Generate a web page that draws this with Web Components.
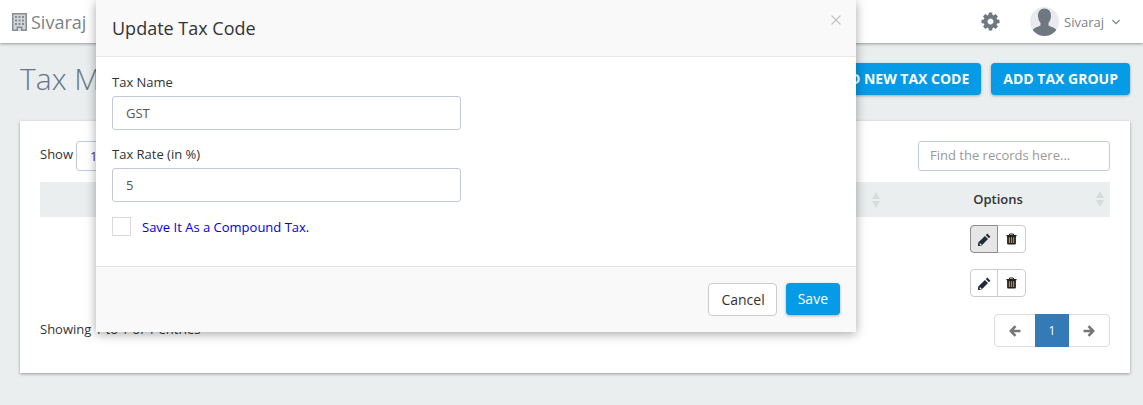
<!DOCTYPE html>
<html lang="en">
  <head>
    <meta charset="UTF-8" />
    <title>Tax Management</title>
    <style>
      html,
      body {
        margin: 0;
        height: 100%;
        overflow: hidden;
      }
      body {
        background: #eaeeef;
        font: 13px/18px "Open Sans", "Liberation Sans", sans-serif;
        color: #333;
      }
    </style>
  </head>
  <body>
    <template id="app-navbar">
      <style>
        :host {
          display: flex;
          align-items: center;
          height: 43px;
          padding: 0 23px 0 12px;
          background: #fff;
          box-shadow: 0 1px 3px rgba(0, 0, 0, 0.35);
        }
        .brand {
          display: flex;
          align-items: center;
          gap: 4px;
          font-size: 18px;
          color: #7b8389;
        }
        .spacer {
          flex: 1;
        }
        .gear {
          width: 21px;
          height: 21px;
          margin-right: 29px;
          fill: #6f7780;
        }
        .user {
          display: flex;
          align-items: center;
          font-size: 13px;
          color: #7b8389;
        }
        .avatar {
          width: 29px;
          height: 29px;
          margin-right: 5px;
        }
        .chev {
          width: 8px;
          height: 6px;
          margin-left: 8px;
        }
      </style>
      <div class="brand">
        <svg width="15" height="18" viewBox="0 0 15 18">
          <path fill="#d3d6d8" d="M0 0h15v18H0z" />
          <path fill="#868d92" fill-rule="evenodd" d="M0 0h15v18H9v-3H6v3H0zM1.500 1.500v15H4.500v-3h6v3h3v-15z" />
          <path fill="#868d92" d="M3 3h2v2H3zM6.500 3h2v2h-2zM10 3h2v2h-2zM3 6.500h2v2H3zM6.500 6.500h2v2h-2zM10 6.500h2v2h-2zM3 10h2v2H3zM6.500 10h2v2h-2zM10 10h2v2h-2z" />
        </svg>
        <slot name="brand"></slot>
      </div>
      <div class="spacer"></div>
      <svg class="gear" viewBox="0 0 1792 1792">
        <path d="M1152 896q0-106-75-181t-181-75-181 75-75 181 75 181 181 75 181-75 75-181zm512-109v222q0 12-8 23t-20 13l-185 28q-19 54-39 91 35 50 107 138 10 12 10 25t-9 23q-27 37-99 108t-94 71q-12 0-26-9l-138-108q-44 23-91 38-16 136-29 186-7 28-36 28h-222q-14 0-24.500-8.500t-11.500-21.500l-28-184q-49-16-90-37l-141 107q-10 9-25 9-14 0-25-11-126-114-165-168-7-10-7-23 0-12 8-23 15-21 51-66.500t54-70.500q-27-50-41-99l-183-27q-13-2-21-12.500t-8-23.500v-222q0-12 8-23t19-13l186-28q14-46 39-92-40-57-107-138-10-12-10-24 0-10 9-23 26-36 98.500-107.500t94.500-71.500q13 0 26 10l138 107q44-23 91-38 16-136 29-186 7-28 36-28h222q14 0 24.500 8.500t11.500 21.500l28 184q49 16 90 37l142-107q9-9 24-9 13 0 25 10 129 119 165 170 7 8 7 22 0 12-8 23-15 21-51 66.500t-54 70.500q26 50 41 98l183 28q13 2 21 12.500t8 23.500z" />
      </svg>
      <div class="user">
        <svg class="avatar" viewBox="0 0 29 29">
          <defs>
            <clipPath id="round"><circle cx="14.500" cy="14.500" r="14.500" /></clipPath>
          </defs>
          <circle cx="14.500" cy="14.500" r="14.500" fill="#e9eaef" />
          <g clip-path="url(#round)" fill="#6f7780">
            <path d="M14.500 1.500c4 0 6.500 3 6.500 7 0 3-1 6-2.500 7.500v2.500c2.500 1.500 6 2 7.500 4 .8 1 1 3 1 6.500H2c0-3.500.2-5.500 1-6.500 1.500-2 5-2.500 7.500-4V16C9 14.500 8 11.500 8 8.500c0-4 2.500-7 6.500-7z" />
          </g>
        </svg>
        <slot name="user"></slot>
        <svg class="chev" viewBox="0 0 8 6">
          <path d="M.4 1l3.600 3.600L7.600 1" fill="none" stroke="#7b8389" stroke-width="1.200" />
        </svg>
      </div>
    </template>

    <template id="page-heading">
      <style>
        :host {
          display: flex;
          align-items: center;
          justify-content: space-between;
          height: 32px;
          margin: 20px 13px 26px 20px;
        }
        h1 {
          margin: 0;
          font-size: 30px;
          line-height: 36px;
          font-weight: 300;
          color: #667685;
        }
        .actions {
          display: flex;
          gap: 10px;
        }
      </style>
      <h1><slot name="title"></slot></h1>
      <div class="actions"><slot></slot></div>
    </template>

    <template id="ui-button">
      <style>
        :host {
          display: inline-flex;
          align-items: center;
          height: 32px;
          padding: 0 12px;
          border-radius: 4px;
          background: #059be6;
          color: #fff;
          font-size: 14px;
          font-weight: 700;
          white-space: nowrap;
          box-shadow: 0 1px 3px rgba(0, 0, 0, 0.3);
        }
        :host([plain]) {
          font-weight: 400;
        }
        :host([outline]) {
          height: 31px;
          padding-right: 11px;
          font-weight: 400;
          color: #333;
          background: #fff;
          border: 1px solid #ccc;
          box-shadow: none;
        }
      </style>
      <slot></slot>
    </template>

    <template id="tax-card">
      <style>
        :host {
          display: block;
          margin: 0 13px 0 20px;
          padding: 20px 20px 26px;
          background: #fff;
          box-shadow: 0 1px 3px rgba(0, 0, 0, 0.35);
        }
        .top {
          display: flex;
          justify-content: space-between;
          align-items: center;
          height: 30px;
          margin-bottom: 11px;
        }
        .bottom {
          display: flex;
          justify-content: space-between;
          align-items: center;
          margin-top: 9px;
        }
        ::slotted(span) {
          margin-bottom: 4px;
        }
      </style>
      <div class="top"><slot name="top"></slot></div>
      <slot></slot>
      <div class="bottom"><slot name="bottom"></slot></div>
    </template>

    <template id="length-select">
      <style>
        :host {
          display: flex;
          align-items: center;
          gap: 3px;
        }
        .label {
          margin-bottom: 4px;
        }
        .box {
          width: 60px;
          height: 30px;
          padding-left: 13px;
          box-sizing: border-box;
          border: 1px solid #c2cad8;
          border-radius: 3px;
          line-height: 28px;
          color: #5a2d82;
        }
      </style>
      <span class="label"><slot></slot></span>
      <div class="box">10</div>
    </template>

    <template id="search-box">
      <style>
        :host {
          display: block;
          width: 192px;
          height: 30px;
          padding: 0 11px;
          box-sizing: border-box;
          border: 1px solid #c2cad8;
          border-radius: 3px;
          line-height: 26px;
          color: #999;
        }
      </style>
      <slot></slot>
    </template>

    <template id="sort-head">
      <style>
        :host {
          display: flex;
          height: 35px;
          background: #eaeeef;
          font-weight: 600;
        }
        .first {
          flex: 1;
          display: flex;
          align-items: center;
          justify-content: flex-end;
          padding-right: 6px;
        }
        .opt {
          width: 224px;
          box-sizing: border-box;
          padding-bottom: 2px;
          display: flex;
          align-items: center;
          justify-content: center;
          position: relative;
        }
        svg {
          width: 8px;
          height: 16px;
          fill: #d6dbdc;
        }
        .opt svg {
          position: absolute;
          right: 6px;
          top: 9px;
        }
      </style>
      <div class="first">
        <svg viewBox="0 0 8 16"><path d="M4 0l4 7H0zM0 9h8l-4 7z" /></svg>
      </div>
      <div class="opt">
        <slot></slot>
        <svg viewBox="0 0 8 16"><path d="M4 0l4 7H0zM0 9h8l-4 7z" /></svg>
      </div>
    </template>

    <template id="row-actions">
      <style>
        :host {
          display: flex;
          justify-content: flex-end;
          align-items: center;
          height: 44px;
          padding-right: 84px;
        }
        .group {
          display: flex;
          height: 28px;
          box-sizing: border-box;
          border: 1px solid #ccc;
          border-radius: 4px;
        }
        .btn {
          width: 27px;
          box-sizing: border-box;
          display: flex;
          align-items: center;
          justify-content: center;
        }
        .edit {
          border-right: 1px solid #ccc;
        }
        :host([active]) .edit {
          width: 28px;
          margin: -1px 0 -1px -1px;
          border: 1px solid #8c8c8c;
          border-radius: 4px 0 0 4px;
          background: #e6e6e6;
        }
        .edit svg {
          width: 13px;
          height: 13px;
        }
        .bin {
          width: 11px;
          height: 12px;
        }
      </style>
      <div class="group">
        <div class="btn edit">
          <svg viewBox="0 0 13 13">
            <path fill="#1f2b3a" d="M9.300.6l3.100 3.100-1.500 1.500-3.100-3.100zM6.900 3l3.100 3.100-6.600 6.600-3.800.7.700-3.800zM1.900 10.100l-.4 1.400 1 1 1.400-.4z" />
          </svg>
        </div>
        <div class="btn">
          <svg class="bin" viewBox="0 0 13 13">
            <path fill="#222" fill-rule="evenodd" d="M4.300 0h4.400l1.100 1.700H12.500v1.600H11.700v8.200c0 .9-.6 1.500-1.400 1.500H2.700c-.8 0-1.400-.6-1.400-1.500V3.300H.5V1.700h2.700zM5 1.200l-.3.500h3.600L8 1.200z" />
            <path fill="#c4801f" d="M3.300 4.300h1.500v7H3.300zM5.800 4.300h1.400v7H5.800zM8.200 4.300h1.500v7H8.200z" />
          </svg>
        </div>
      </div>
    </template>

    <template id="page-nav">
      <style>
        :host {
          display: flex;
          height: 33px;
          box-sizing: border-box;
          border: 1px solid #ddd;
          border-radius: 4px;
        }
        .arrow {
          width: 40px;
          display: flex;
          align-items: center;
          justify-content: center;
        }
        .page {
          width: 34px;
          margin: -1px 0;
          background: #337ab7;
          color: #fff;
          display: flex;
          align-items: center;
          justify-content: center;
          font-size: 12px;
        }
        svg {
          width: 12px;
          height: 12px;
        }
      </style>
      <div class="arrow">
        <svg viewBox="0 0 12 12">
          <path fill="none" stroke="#777" stroke-width="2.600" d="M11.500 6H2.500M6.500 1.200L1.800 6l4.700 4.800" />
        </svg>
      </div>
      <div class="page"><slot></slot></div>
      <div class="arrow">
        <svg viewBox="0 0 12 12">
          <path fill="none" stroke="#777" stroke-width="2.600" d="M.5 6h9M5.500 1.200L10.200 6l-4.700 4.800" />
        </svg>
      </div>
    </template>

    <template id="modal-dialog">
      <style>
        :host {
          position: absolute;
          left: 96px;
          top: 0;
          width: 760px;
          height: 332px;
          display: flex;
          flex-direction: column;
          background: #fff;
          box-shadow: 0 2px 10px rgba(0, 0, 0, 0.35);
        }
        header {
          display: flex;
          align-items: center;
          justify-content: space-between;
          height: 56px;
          padding: 0 15px 0 16px;
          background: #f9f9f9;
          border-bottom: 1px solid #e9e9e9;
        }
        h2 {
          margin: 0;
          font-size: 18px;
          font-weight: 400;
          color: #333;
        }
        .close {
          width: 10px;
          height: 10px;
          margin-bottom: 16px;
        }
        main {
          flex: 1;
          padding: 16px 16px 0;
        }
        footer {
          display: flex;
          justify-content: flex-end;
          gap: 9px;
          height: 66px;
          box-sizing: border-box;
          padding: 16px 16px 0;
          background: #f9f9f9;
          border-top: 1px solid #e5e5e5;
        }
      </style>
      <header>
        <h2><slot name="title"></slot></h2>
        <svg class="close" viewBox="0 0 10 10">
          <path d="M.5.500l9 9M9.500.500l-9 9" stroke="#c4c4c4" stroke-width="1.200" />
        </svg>
      </header>
      <main><slot></slot></main>
      <footer><slot name="footer"></slot></footer>
    </template>

    <template id="text-field">
      <style>
        :host {
          display: block;
          margin-bottom: 15px;
        }
        label {
          display: block;
          margin-bottom: 4px;
          line-height: 19px;
          color: #333;
        }
        .input {
          width: 349px;
          height: 34px;
          box-sizing: border-box;
          padding: 0 13px;
          border: 1px solid #c2cad8;
          border-radius: 3px;
          line-height: 32px;
          color: #555;
        }
      </style>
      <label><slot></slot></label>
      <div class="input"></div>
    </template>

    <template id="check-field">
      <style>
        :host {
          display: flex;
          align-items: center;
          gap: 11px;
          color: #0000e0;
        }
        .box {
          width: 19px;
          height: 19px;
          box-sizing: border-box;
          border: 1px solid #d9d9d9;
        }
      </style>
      <div class="box"></div>
      <slot></slot>
    </template>

    <app-navbar>
      <span slot="brand">Sivaraj</span>
      <span slot="user">Sivaraj</span>
    </app-navbar>

    <page-heading>
      <span slot="title">Tax M</span>
      <ui-button>ADD NEW TAX CODE</ui-button>
      <ui-button>ADD TAX GROUP</ui-button>
    </page-heading>

    <tax-card>
      <length-select slot="top">Show</length-select>
      <search-box slot="top">Find the records here...</search-box>
      <sort-head>Options</sort-head>
      <row-actions active></row-actions>
      <row-actions></row-actions>
      <span slot="bottom">Showing 1 to 1 of 1 entries</span>
      <page-nav slot="bottom">1</page-nav>
    </tax-card>

    <modal-dialog>
      <span slot="title">Update Tax Code</span>
      <text-field value="GST">Tax Name</text-field>
      <text-field value="5">Tax Rate (in %)</text-field>
      <check-field>Save It As a Compound Tax.</check-field>
      <ui-button slot="footer" outline>Cancel</ui-button>
      <ui-button slot="footer" plain>Save</ui-button>
    </modal-dialog>

    <script>
      // plain elements: clone the template of the same name into an open shadow root
      class TemplateElement extends HTMLElement {
        constructor() {
          super();
          this.attachShadow({ mode: "open" }).appendChild(
            document.getElementById(this.localName).content.cloneNode(true)
          );
        }
      }

      class TextField extends TemplateElement {
        connectedCallback() {
          this.shadowRoot.querySelector(".input").textContent =
            this.getAttribute("value") || "";
        }
      }

      [
        "app-navbar",
        "page-heading",
        "ui-button",
        "tax-card",
        "length-select",
        "search-box",
        "sort-head",
        "row-actions",
        "page-nav",
        "modal-dialog",
        "check-field",
      ].forEach((name) => {
        customElements.define(name, class extends TemplateElement {});
      });
      customElements.define("text-field", TextField);
    </script>
  </body>
</html>
